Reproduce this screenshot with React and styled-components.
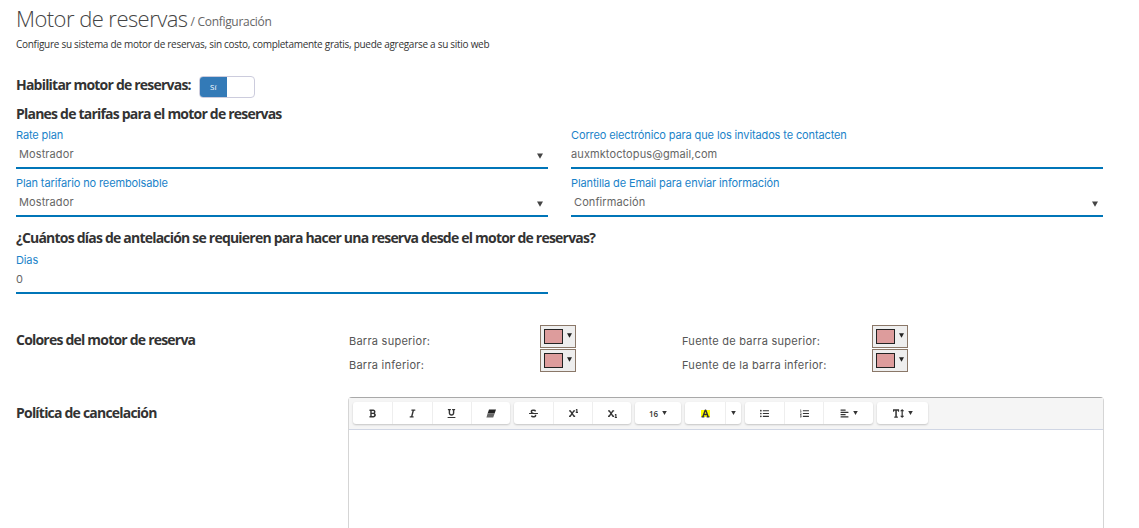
import React from 'react';
import styled, { createGlobalStyle } from 'styled-components';
import {
  FaBold, FaItalic, FaUnderline, FaStrikethrough, FaSuperscript, FaSubscript,
  FaFont, FaListUl, FaListOl, FaAlignLeft, FaTextHeight,
} from 'react-icons/fa';

const GlobalStyle = createGlobalStyle`
  html, body {
    margin: 0;
    height: 528px;
    overflow: hidden;
    background: #fff;
    font-family: "Open Sans", "Liberation Sans", sans-serif;
    color: #333;
  }
`;

const Page = styled.div`
  padding: 0 36px 0 16px;
  width: 1139px;
  height: 528px;
  overflow: hidden;
  box-sizing: border-box;
`;

const Title = styled.h1`
  margin: 0;
  padding-top: 2px;
  height: 32px;
  font-weight: 300;
  font-size: 22px;
  line-height: 32px;
  letter-spacing: -0.55px;
  color: #444;
`;

const TitleSub = styled.small`
  vertical-align: 1px;
  font-size: 12px;
  font-weight: 400;
  letter-spacing: -0.3px;
  color: #666;
  margin-left: 3px;
`;

const Intro = styled.p`
  margin: 3px 0 0;
  font-size: 10px;
  line-height: 14px;
  letter-spacing: -0.28px;
  color: #333;
`;

const EnableRow = styled.div`
  display: flex;
  align-items: center;
  margin-top: 25px;
  height: 22px;
`;

const SectionLabel = styled.h4`
  margin: ${(p) => p.$top || 0}px 0 0;
  font-size: 14px;
  line-height: 20px;
  font-weight: 700;
  letter-spacing: -0.79px;
  color: #333;
`;

const EnableLabel = styled(SectionLabel)`
  padding-bottom: 4px;
`;

const Toggle = styled.div`
  display: flex;
  width: 56px;
  height: 22px;
  margin-left: 8px;
  box-sizing: border-box;
  border: 1px solid #ccd;
  border-radius: 4px;
  overflow: hidden;
`;

const ToggleOn = styled.span`
  width: 27px;
  background: #337ab7;
  color: #fff;
  font-size: 8px;
  line-height: 20px;
  text-align: center;
`;

const FormGrid = styled.div`
  display: grid;
  grid-template-columns: 532px 532px;
  column-gap: 23px;
  row-gap: 6px;
  margin-top: ${(p) => p.$top || 3}px;
`;

const Field = styled.div`
  width: 532px;
  height: 40px;
  border-bottom: 2px solid #0075b8;
`;

const FieldLabel = styled.div`
  font-family: Inter, "Open Sans", sans-serif;
  font-size: 11px;
  line-height: 16px;
  letter-spacing: -0.12px;
  color: #1a83c9;
`;

const FieldValue = styled.div`
  display: flex;
  justify-content: space-between;
  align-items: center;
  margin-top: 2px;
  padding: 0 ${(p) => (p.$select ? '3px' : '0')};
  font-family: Inter, "Open Sans", sans-serif;
  font-size: 11px;
  line-height: 18px;
  letter-spacing: 0.1px;
  color: #666;
`;

const SelectArrow = styled.svg`
  width: 6px;
  height: 6px;
  margin: 4px 2px 0 0;
  fill: #444;
`;

const ColorSection = styled.div`
  display: grid;
  grid-template-columns: 333px 1fr;
  margin-top: 31px;
`;

const SideLabel = styled(SectionLabel)`
  padding-top: ${(p) => p.$pad || 0}px;
`;

const ColorGrid = styled.div`
  display: grid;
  grid-template-columns: 333px 333px;
  row-gap: 1px;
`;

const ColorItem = styled.div`
  display: grid;
  grid-template-columns: ${(p) => p.$label || 191}px 36px;
  align-items: end;
  font-family: Inter, "Open Sans", sans-serif;
  font-size: 11px;
  line-height: 14px;
  letter-spacing: 0.25px;
  color: #555;
`;

const Picker = styled.div`
  display: flex;
  align-items: center;
  gap: 4px;
  box-sizing: border-box;
  width: 36px;
  height: 23px;
  padding-left: 3px;
  background: #eee;
  border: 1px solid #8a7768;
`;

const PickerArrow = styled.svg`
  width: 5px;
  height: 5px;
  margin-bottom: 3px;
  fill: #222;
`;

const Swatch = styled.span`
  width: 19px;
  height: 15px;
  box-sizing: border-box;
  background: #dd9c9c;
  border: 1px solid #222;
`;

const EditorSection = styled(ColorSection)`
  margin-top: 25px;
`;

const Editor = styled.div`
  width: 756px;
  margin-left: -1px;
  height: 200px;
  box-sizing: border-box;
  border: 1px solid #d5d5d5;
  border-top-color: #a9a9a9;
  border-radius: 4px 4px 0 0;
`;

const Toolbar = styled.div`
  display: flex;
  gap: 4px;
  height: 32px;
  box-sizing: border-box;
  padding: 4px 4px 0;
  background: #f5f5f5;
  border-bottom: 1px solid #d0d6e4;
`;

const ToolGroup = styled.div`
  display: flex;
  height: 22px;
  background: #fff;
  border-radius: 3px;
  box-shadow: 0 1px 2px rgba(0, 0, 0, 0.2);
`;

const ToolButton = styled.div`
  display: flex;
  align-items: center;
  justify-content: center;
  gap: 4px;
  box-sizing: border-box;
  width: ${(p) => p.$w || 39}px;
  color: #333;
  font-size: 9px;
  font-weight: 600;
  & + & { border-left: 1px solid #eee; }
`;

const SizeText = styled.span`
  font-size: 8px;
  font-weight: 600;
  color: #333;
`;

const ToolArrow = styled.svg`
  width: 5px;
  height: 4px;
  fill: #333;
`;

const TallIcon = styled(FaTextHeight)`
  font-size: 11px;
`;

const Highlight = styled.span`
  display: flex;
  background: linear-gradient(#fff 15%, #ff0 15%, #ff0 90%, #fff 90%);
`;

const Down = ({ as: Tag, ...rest }) => (
  <Tag viewBox="0 0 8 7" {...rest}><polygon points="0,0 8,0 4,7" /></Tag>
);

const Eraser = () => (
  <svg width="10" height="9" viewBox="0 0 10 9">
    <polygon points="3,0.5 10,0.5 8.6,4.5 1.6,4.5" fill="#222" />
    <polygon points="1.6,4.5 8.6,4.5 7.2,8.5 0.4,8.5" fill="#666" />
  </svg>
);

const tools = [
  [<FaBold />, <FaItalic />, <FaUnderline />, <Eraser />],
  [<FaStrikethrough />, <FaSuperscript />, <FaSubscript />],
];

const Select = ({ label, value }) => (
  <Field>
    <FieldLabel>{label}</FieldLabel>
    <FieldValue $select>{value}<Down as={SelectArrow} /></FieldValue>
  </Field>
);

const Input = ({ label, value }) => (
  <Field>
    <FieldLabel>{label}</FieldLabel>
    <FieldValue>{value}</FieldValue>
  </Field>
);

const ColorPick = ({ label, labelWidth }) => (
  <ColorItem $label={labelWidth}>
    <span>{label}</span>
    <Picker><Swatch /><Down as={PickerArrow} /></Picker>
  </ColorItem>
);

export default function App() {
  return (
    <Page>
      <GlobalStyle />
      <Title>Motor de reservas<TitleSub>/ Configuración</TitleSub></Title>
      <Intro>Configure su sistema de motor de reservas, sin costo, completamente gratis, puede agregarse a su sitio web</Intro>

      <EnableRow>
        <EnableLabel>Habilitar motor de reservas:</EnableLabel>
        <Toggle><ToggleOn>Sí</ToggleOn></Toggle>
      </EnableRow>

      <SectionLabel $top={6}>Planes de tarifas para el motor de reservas</SectionLabel>
      <FormGrid>
        <Select label="Rate plan" value="Mostrador" />
        <Input label="Correo electrónico para que los invitados te contacten" value="auxmktoctopus@gmail,com" />
        <Select label="Plan tarifario no reembolsable" value="Mostrador" />
        <Select label="Plantilla de Email para enviar información" value="Confirmación" />
      </FormGrid>

      <SectionLabel $top={11}>¿Cuántos días de antelación se requieren para hacer una reserva desde el motor de reservas?</SectionLabel>
      <FormGrid $top={4}>
        <Input label="Dias" value="0" />
      </FormGrid>

      <ColorSection>
        <SideLabel $pad={5}>Colores del motor de reserva</SideLabel>
        <ColorGrid>
          <ColorPick label="Barra superior:" />
          <ColorPick label="Fuente de barra superior:" labelWidth={190} />
          <ColorPick label="Barra inferior:" />
          <ColorPick label="Fuente de la barra inferior:" labelWidth={190} />
        </ColorGrid>
      </ColorSection>

      <EditorSection>
        <SideLabel $pad={6}>Política de cancelación</SideLabel>
        <Editor>
          <Toolbar>
            {tools.map((group, i) => (
              <ToolGroup key={i}>
                {group.map((icon, j) => <ToolButton key={j} $w={i === 0 ? 39.25 : 39}>{icon}</ToolButton>)}
              </ToolGroup>
            ))}
            <ToolGroup><ToolButton $w={46}><SizeText>16</SizeText><Down as={ToolArrow} /></ToolButton></ToolGroup>
            <ToolGroup>
              <ToolButton $w={40}><Highlight><FaFont /></Highlight></ToolButton>
              <ToolButton $w={16}><Down as={ToolArrow} /></ToolButton>
            </ToolGroup>
            <ToolGroup>
              <ToolButton><FaListUl /></ToolButton>
              <ToolButton><FaListOl /></ToolButton>
              <ToolButton $w={50}><FaAlignLeft /><Down as={ToolArrow} /></ToolButton>
            </ToolGroup>
            <ToolGroup><ToolButton $w={51}><TallIcon /><Down as={ToolArrow} /></ToolButton></ToolGroup>
          </Toolbar>
        </Editor>
      </EditorSection>
    </Page>
  );
}
